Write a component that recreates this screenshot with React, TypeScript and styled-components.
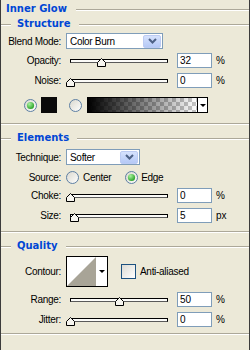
import React from "react";
import styled, { createGlobalStyle } from "styled-components";

const GlobalStyle = createGlobalStyle`
  html, body {
    margin: 0;
    padding: 0;
    background: #ece9d8;
  }
  body {
    font-family: "Liberation Sans", Arial, sans-serif;
    font-size: 10px;
    color: #000;
  }
`;

const Panel = styled.div`
  width: 250px;
  height: 350px;
  box-sizing: border-box;
  border-left: 1px solid #3c3c3c;
  border-right: 1px solid #3c3c3c;
  background: #ece9d8;
  display: flex;
  flex-direction: column;
  overflow: hidden;
`;

const Rule = styled.div`
  flex: 1;
  height: 0;
  border-top: 1px solid #aca899;
  border-bottom: 1px solid #fff;
`;

const LeadRule = styled(Rule)`
  flex: 0 0 10px;
`;

const TitleRow = styled.div`
  display: flex;
  align-items: center;
  height: 20px;
  padding-left: 5px;
`;

const HeadingText = styled.span`
  font-family: "DejaVu Sans", Verdana, sans-serif;
  font-weight: bold;
  font-size: 10px;
  line-height: 12px;
  margin-bottom: 2px;
  color: #0046d5;
  white-space: nowrap;
`;

const TitleText = styled(HeadingText)`
  margin-right: 9px;
`;

const Section = styled.section`
  display: flex;
  flex-direction: column;
  & + & {
    margin-top: 9px;
  }
`;

const HeadingRow = styled.div`
  display: flex;
  align-items: center;
  height: 10px;

  ${HeadingText} {
    margin-left: 6px;
    margin-right: 8px;
  }
`;

const BottomRule = styled.div`
  height: 0;
  border-top: 1px solid #aca899;
  border-bottom: 1px solid #fff;
  margin-top: ${(p: { top: number }) => p.top}px;
`;

const Row = styled.div<{ h: number; top: number; indent?: number }>`
  display: flex;
  align-items: center;
  height: ${(p) => p.h}px;
  margin-top: ${(p) => p.top}px;
  padding-left: ${(p) => p.indent ?? 0}px;
`;

const Label = styled.span`
  flex: 0 0 60px;
  text-align: right;
  margin-right: 5px;
  letter-spacing: -0.3px;
  white-space: nowrap;
`;

const Text = styled.span<{ left?: number }>`
  margin-left: ${(p) => p.left ?? 4}px;
  letter-spacing: -0.3px;
  white-space: nowrap;
`;

const SelectBox = styled.div<{ w: number }>`
  width: ${(p) => p.w}px;
  height: 16px;
  box-sizing: border-box;
  border: 1px solid #7f9db9;
  background: #fff;
  display: flex;
  align-items: center;
  padding-right: 1px;
`;

const SelectText = styled.span`
  flex: 1;
  padding-left: 3px;
  letter-spacing: -0.3px;
`;

const SelectButton = styled.div`
  width: 18px;
  height: 13px;
  box-sizing: border-box;
  border: 1px solid #bccbf3;
  border-radius: 2px;
  background: linear-gradient(#d6e2fd, #b5c9f6);
  display: flex;
  align-items: center;
  justify-content: center;
  padding-bottom: 1px;
`;

const SliderBox = styled.div`
  position: relative;
  width: 106px;
  height: 15px;
  box-sizing: border-box;
  padding: 0 4px;
  display: flex;
  align-items: center;
`;

const Track = styled.div`
  flex: 1;
  height: 4px;
  box-sizing: border-box;
  border: 1px solid #000;
  border-bottom-color: #5a5a5a;
  background: #fbfbf8;
`;

const ThumbWrap = styled.div`
  position: absolute;
  top: 5px;
  width: 9px;
  height: 9px;
  margin-left: -0.5px;
  line-height: 0;
`;

const Field = styled.div`
  margin-left: 5px;
  width: 35px;
  height: 15px;
  box-sizing: border-box;
  border: 1px solid #7f9db9;
  background: #fff;
  padding-left: 2px;
  line-height: 13px;
  font-size: 10px;
`;

const Unit = styled.span`
  margin-left: 4px;
  margin-bottom: 1px;
`;

const RadioSvg = styled.svg`
  flex: 0 0 13px;
  display: block;
`;

const Swatch = styled.div`
  margin-left: 4px;
  width: 16px;
  height: 16px;
  background: #0a0a0a;
`;

const GradientBox = styled.div`
  margin-left: 5px;
  width: 121px;
  height: 16px;
  box-sizing: border-box;
  border: 1px solid #000;
  background: #fff;
  display: flex;
`;

const GradientFill = styled.div`
  flex: 1;
  background: linear-gradient(to right, #000, rgba(0, 0, 0, 0)),
    repeating-conic-gradient(#c6c6c6 0% 25%, #fff 0% 50%) 0 0 / 8px 8px;
`;

const ArrowPart = styled.div<{ w: number }>`
  flex: 0 0 ${(p) => p.w}px;
  border-left: 1px solid #000;
  display: flex;
  align-items: center;
  justify-content: center;
`;

const DownTri = styled.span`
  width: 0;
  height: 0;
  border-left: 3px solid transparent;
  border-right: 3px solid transparent;
  border-top: 3px solid #000;
`;

const ContourBox = styled.div`
  width: 42px;
  height: 31px;
  box-sizing: border-box;
  border: 1px solid #000;
  background: #fff;
  display: flex;
`;

const ContourArrow = styled.div`
  flex: 1;
  display: flex;
  align-items: center;
  justify-content: center;
`;

const CheckBox = styled.div`
  margin-left: 13px;
  width: 15px;
  height: 15px;
  box-sizing: border-box;
  border: 1px solid #1c5180;
  background: linear-gradient(135deg, #dcdbd4, #fff);
`;

const Radio = ({ on }: { on?: boolean }) => (
  <RadioSvg width="13" height="13" viewBox="0 0 13 13">
    <defs>
      <linearGradient id="rbg" x1="0" y1="0" x2="1" y2="1">
        <stop offset="0" stopColor="#d9d7cd" />
        <stop offset="1" stopColor="#ffffff" />
      </linearGradient>
      <radialGradient id="rdot" cx="0.35" cy="0.3" r="0.8">
        <stop offset="0" stopColor="#a9f29f" />
        <stop offset="1" stopColor="#1c9a1c" />
      </radialGradient>
    </defs>
    <circle cx="6.5" cy="6.5" r="6" fill="url(#rbg)" stroke="#5d7ea2" />
    {on && <circle cx="6.5" cy="6.5" r="3.6" fill="url(#rdot)" />}
  </RadioSvg>
);

const Chevron = () => (
  <svg width="9" height="6" viewBox="0 0 9 6">
    <polyline points="1,1 4.5,4.5 8,1" fill="none" stroke="#4d6185" strokeWidth="2" />
  </svg>
);

const Slider = ({ pos }: { pos: number }) => (
  <SliderBox>
    <Track />
    <ThumbWrap style={{ left: `calc(${pos / 100} * (100% - 8px))` }}>
      <svg width="9" height="9" viewBox="0 0 9 9">
        <polygon
          points="4.5,0.5 8.5,4.5 8.5,8.5 0.5,8.5 0.5,4.5"
          fill="#f6f5ef"
          stroke="#000"
        />
      </svg>
    </ThumbWrap>
  </SliderBox>
);

const SliderRow = ({
  label,
  pos,
  value,
  unit,
  top,
}: {
  label: string;
  pos: number;
  value: string;
  unit: string;
  top: number;
}) => (
  <Row h={15} top={top}>
    <Label>{label}</Label>
    <Slider pos={pos} />
    <Field>{value}</Field>
    <Unit>{unit}</Unit>
  </Row>
);

const Heading = ({ children }: { children: string }) => (
  <HeadingRow>
    <LeadRule />
    <HeadingText>{children}</HeadingText>
    <Rule />
  </HeadingRow>
);

export default function App() {
  return (
    <Panel>
      <GlobalStyle />
      <TitleRow>
        <TitleText>Inner Glow</TitleText>
        <Rule />
      </TitleRow>

      <Section>
        <Heading>Structure</Heading>
        <Row h={16} top={3}>
          <Label>Blend Mode:</Label>
          <SelectBox w={97}>
            <SelectText>Color Burn</SelectText>
            <SelectButton>
              <Chevron />
            </SelectButton>
          </SelectBox>
        </Row>
        <SliderRow label="Opacity:" pos={32} value="32" unit="%" top={4} />
        <SliderRow label="Noise:" pos={0} value="0" unit="%" top={5} />
        <Row h={16} top={9} indent={23}>
          <Radio on />
          <Swatch />
          <Text left={12}>
            <Radio />
          </Text>
          <GradientBox>
            <GradientFill />
            <ArrowPart w={9}>
              <DownTri />
            </ArrowPart>
          </GradientBox>
        </Row>
        <BottomRule top={10} />
      </Section>

      <Section>
        <Heading>Elements</Heading>
        <Row h={16} top={5}>
          <Label>Technique:</Label>
          <SelectBox w={74}>
            <SelectText>Softer</SelectText>
            <SelectButton>
              <Chevron />
            </SelectButton>
          </SelectBox>
        </Row>
        <Row h={14} top={5}>
          <Label>Source:</Label>
          <Radio />
          <Text>Center</Text>
          <Text left={14}>
            <Radio on />
          </Text>
          <Text left={3}>Edge</Text>
        </Row>
        <SliderRow label="Choke:" pos={0} value="0" unit="%" top={4} />
        <SliderRow label="Size:" pos={4.5} value="5" unit="px" top={5} />
        <BottomRule top={8} />
      </Section>

      <Section>
        <Heading>Quality</Heading>
        <Row h={31} top={4}>
          <Label>Contour:</Label>
          <ContourBox>
            <svg width="29" height="29" viewBox="0 0 29 29">
              <polygon points="0,29 29,0 29,29" fill="#a8a497" />
            </svg>
            <ContourArrow>
              <DownTri />
            </ContourArrow>
          </ContourBox>
          <CheckBox />
          <Text>Anti-aliased</Text>
        </Row>
        <SliderRow label="Range:" pos={50} value="50" unit="%" top={5} />
        <SliderRow label="Jitter:" pos={0} value="0" unit="%" top={5} />
        <BottomRule top={6} />
      </Section>
    </Panel>
  );
}
